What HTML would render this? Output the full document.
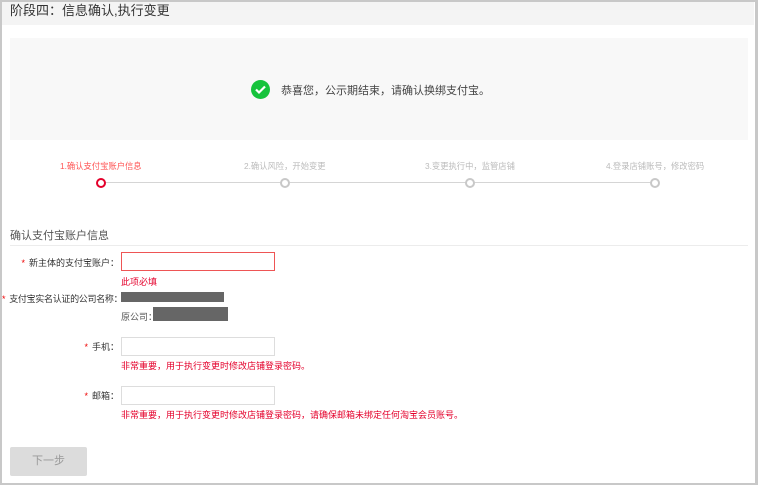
<!DOCTYPE html>
<html><head><meta charset="utf-8"><style>
*{margin:0;padding:0;box-sizing:border-box}
body{width:758px;height:485px;background:#fff;font-family:"Liberation Sans","Noto Sans CJK SC",sans-serif;position:relative;overflow:hidden}
.frame{position:absolute;left:0;top:0;width:758px;height:485px;border:2px solid #c8c8c8;border-right-width:3px}
.hd{position:absolute;left:2px;top:2px;width:752px;height:23px;background:#f4f4f4;font-size:13px;color:#333;padding-left:8px;line-height:18px}
.box{position:absolute;left:10px;top:38px;width:738px;height:102px;background:#f8f8f8}
.ok{position:absolute;left:251px;top:80px;width:19px;height:19px;border-radius:50%;background:#16c33c}
.msg{position:absolute;left:281px;top:82px;font-size:11px;color:#444}
.t{position:absolute;font-size:8.3px;color:#bbb;top:160px;white-space:nowrap}
.line{position:absolute;left:101px;top:182px;width:554px;height:1px;background:#d5d5d5}
.c{position:absolute;top:178px;width:10px;height:10px;border-radius:50%;border:2px solid #c8c8c8;background:#fff}
.sec{position:absolute;left:10px;top:227px;font-size:11px;color:#555}
.sep{position:absolute;left:10px;top:245px;width:738px;height:1px;background:#ececec}
.lb{position:absolute;font-size:9px;color:#333;text-align:right;white-space:nowrap}
.lb b{color:#e00;font-weight:normal;margin-right:4px}
.in{position:absolute;left:121px;width:154px;height:19px;border:1px solid #ddd;background:#fff}
.err{position:absolute;left:121px;font-size:9px;color:#e4002b;white-space:nowrap}
.gr{position:absolute;background:#666}
.btn{position:absolute;left:10px;top:447px;width:77px;height:29px;background:#dcdcdc;border-radius:2px;color:#999;font-size:11px;text-align:center;line-height:29px}
</style></head><body>
<div class="frame"></div>
<div class="hd">阶段四：信息确认,执行变更</div>
<div class="box"></div>
<div class="ok"><svg width="19" height="19"><path d="M5 9.5l3 3 6-6" stroke="#fff" stroke-width="2.2" fill="none"/></svg></div>
<div class="msg">恭喜您，公示期结束，请确认换绑支付宝。</div>
<div class="t" style="left:60px;color:#f55">1.确认支付宝账户信息</div>
<div class="t" style="left:244px">2.确认风险，开始变更</div>
<div class="t" style="left:425px">3.变更执行中，监管店铺</div>
<div class="t" style="left:606px">4.登录店铺账号，修改密码</div>
<div class="line"></div>
<div class="c" style="left:96px;border-color:#e4002b"></div>
<div class="c" style="left:280px"></div>
<div class="c" style="left:465px"></div>
<div class="c" style="left:650px"></div>
<div class="sec">确认支付宝账户信息</div>
<div class="sep"></div>
<div class="lb" style="left:20px;top:256px;width:99px"><b>*</b>新主体的支付宝账户：</div>
<div class="in" style="top:252px;border-color:#e55"></div>
<div class="err" style="top:275px">此项必填</div>
<div class="lb" style="left:2px;top:292px;width:118px;letter-spacing:-0.3px"><b>*</b>支付宝实名认证的公司名称：</div>
<div class="gr" style="left:121px;top:292px;width:103px;height:10px"></div>
<div class="lb" style="left:121px;top:310px;color:#555">原公司：</div>
<div class="gr" style="left:153px;top:307px;width:75px;height:14px"></div>
<div class="lb" style="left:60px;top:340px;width:59px"><b>*</b>手机：</div>
<div class="in" style="top:337px"></div>
<div class="err" style="top:359px">非常重要，用于执行变更时修改店铺登录密码。</div>
<div class="lb" style="left:60px;top:389px;width:59px"><b>*</b>邮箱：</div>
<div class="in" style="top:386px"></div>
<div class="err" style="top:408px">非常重要，用于执行变更时修改店铺登录密码，请确保邮箱未绑定任何淘宝会员账号。</div>
<div class="btn">下一步</div>
</body></html>
